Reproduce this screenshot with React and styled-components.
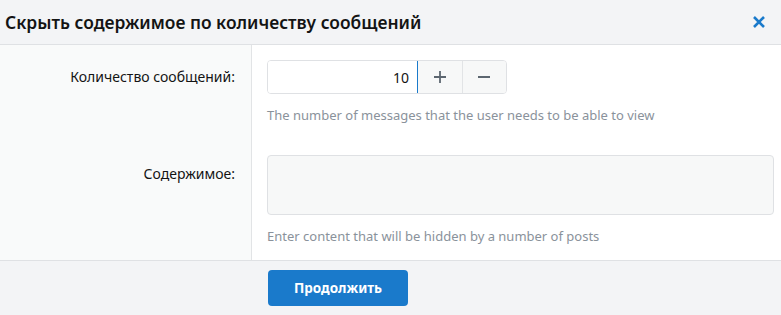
import { useState } from "react";
import styled, { createGlobalStyle } from "styled-components";

const GlobalStyle = createGlobalStyle`
    html, body {
        margin: 0;
        padding: 0;
        background: #ffffff;
    }
    body {
        font-family: "Segoe UI", "Noto Sans", "Open Sans", sans-serif;
        color: #141414;
    }
    * {
        box-sizing: border-box;
    }
`;

const Overlay = styled.div`
    width: 781px;
    height: 315px;
    display: flex;
    flex-direction: column;
    background: #ffffff;
    overflow: hidden;
`;

const Header = styled.div`
    height: 45px;
    display: flex;
    align-items: center;
    justify-content: space-between;
    padding: 0 14px 0 5px;
    background: #f3f4f6;
    border-bottom: 1px solid #dfe1e4;
`;

const Title = styled.h2`
    margin: 0;
    font-size: 17.4px;
    font-weight: 600;
    color: #141414;
`;

const CloseButton = styled.button`
    background: none;
    border: none;
    padding: 0;
    width: 16px;
    height: 16px;
    display: flex;
    align-items: center;
    justify-content: center;
    cursor: pointer;
    color: #1a7acb;
`;

const Body = styled.div`
    flex: 1;
    display: flex;
    flex-direction: column;
`;

const Row = styled.div`
    display: grid;
    grid-template-columns: 252px 1fr;
    flex: ${(p) => (p.$grow ? 1 : "none")};
`;

const LabelCell = styled.div`
    background: #f9fafa;
    border-right: 1px solid #e2e4e6;
    padding-top: ${(p) => p.$top}px;
    padding-right: 16px;
    text-align: right;
    font-size: 14px;
    color: #141414;
`;

const FieldCell = styled.div`
    padding: ${(p) => p.$top}px 7px ${(p) => p.$bottom || 0}px 15px;
`;

const Spinner = styled.div`
    display: flex;
    width: 240px;
    height: 34px;
    border: 1px solid #dfe1e4;
    border-radius: 4px;
    overflow: hidden;
`;

const NumberInput = styled.input`
    width: 150px;
    border: none;
    border-right: 1px solid #1a7acb;
    padding: 0 8px;
    text-align: right;
    font-family: inherit;
    font-size: 14px;
    color: #141414;
    background: #ffffff;
    outline: none;
`;

const StepButton = styled.button`
    flex: 1;
    border: none;
    border-left: ${(p) => (p.$first ? "none" : "1px solid #e2e4e6")};
    background: #f7f8f8;
    color: #5c6670;
    display: flex;
    align-items: center;
    justify-content: center;
    padding: 0;
    cursor: pointer;
`;

const Hint = styled.div`
    margin-top: 12px;
    font-size: 13px;
    color: #8a929b;
`;

const TextArea = styled.textarea`
    display: block;
    width: 100%;
    height: 60px;
    resize: none;
    border: 1px solid #dfe1e4;
    border-radius: 4px;
    background: #f7f8f8;
    font-family: inherit;
    font-size: 14px;
    padding: 8px;
    outline: none;
`;

const Footer = styled.div`
    height: 55px;
    flex: none;
    background: #f3f4f6;
    border-top: 1px solid #dfe1e4;
    padding: 9px 0 0 268px;
`;

const SubmitButton = styled.button`
    width: 140px;
    height: 36px;
    border: none;
    border-radius: 4px;
    background: #1a7acb;
    color: #ffffff;
    font-family: inherit;
    font-size: 13.5px;
    font-weight: 700;
    cursor: pointer;
`;

const PlusIcon = () => (
    <svg width="14" height="14" viewBox="0 0 14 14">
        <path d="M7 1v12M1 7h12" stroke="currentColor" strokeWidth="1.8" />
    </svg>
);

const MinusIcon = () => (
    <svg width="14" height="14" viewBox="0 0 14 14">
        <path d="M1 7h12" stroke="currentColor" strokeWidth="1.8" />
    </svg>
);

const CloseIcon = () => (
    <svg width="14" height="14" viewBox="0 0 14 14">
        <path d="M2 2l10 10M12 2L2 12" stroke="currentColor" strokeWidth="2.6" />
    </svg>
);

export default function App() {
    const [count, setCount] = useState(10);

    return (
        <Overlay>
            <GlobalStyle />
            <Header>
                <Title>Скрыть содержимое по количеству сообщений</Title>
                <CloseButton aria-label="Закрыть">
                    <CloseIcon />
                </CloseButton>
            </Header>

            <Body>
                <Row>
                    <LabelCell $top={22}>Количество сообщений:</LabelCell>
                    <FieldCell $top={15} $bottom={10}>
                        <Spinner>
                            <NumberInput
                                value={count}
                                onChange={(e) => setCount(Number(e.target.value) || 0)}
                            />
                            <StepButton $first onClick={() => setCount(count + 1)}>
                                <PlusIcon />
                            </StepButton>
                            <StepButton onClick={() => setCount(Math.max(0, count - 1))}>
                                <MinusIcon />
                            </StepButton>
                        </Spinner>
                        <Hint>The number of messages that the user needs to be able to view</Hint>
                    </FieldCell>
                </Row>
                <Row $grow>
                    <LabelCell $top={30}>Содержимое:</LabelCell>
                    <FieldCell $top={21}>
                        <TextArea />
                        <Hint>Enter content that will be hidden by a number of posts</Hint>
                    </FieldCell>
                </Row>
            </Body>

            <Footer>
                <SubmitButton>Продолжить</SubmitButton>
            </Footer>
        </Overlay>
    );
}
